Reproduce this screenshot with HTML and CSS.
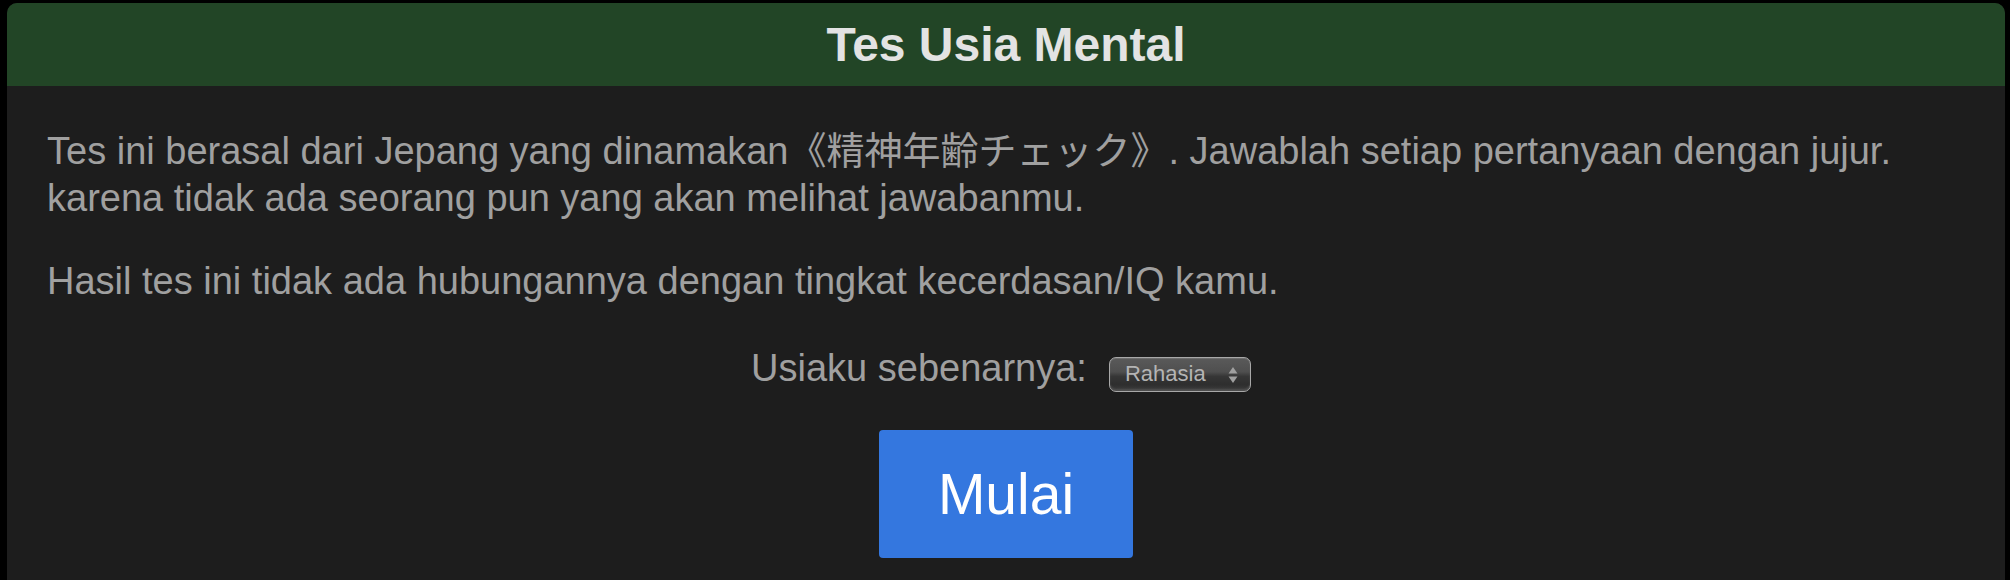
FILE: index.html
```html
<!DOCTYPE html>
<html lang="id">
<head>
<meta charset="utf-8">
<title>Tes Usia Mental</title>
<link rel="stylesheet" href="styles.css">
</head>
<body>
<div class="panel">
  <div class="header">Tes Usia Mental</div>
  <div class="content">
    <p class="intro">Tes ini berasal dari Jepang yang dinamakan《精神年齢チェック》. Jawablah setiap pertanyaan dengan jujur.<br>karena tidak ada seorang pun yang akan melihat jawabanmu.</p>
    <p class="note">Hasil tes ini tidak ada hubungannya dengan tingkat kecerdasan/IQ kamu.</p>
    <div class="age-row">
      <label class="age-label" for="age">Usiaku sebenarnya:</label>
      <span class="select-wrap">
        <select id="age" class="age-select">
          <option>Rahasia</option>
        </select>
        <svg class="select-arrows" width="12" height="20" viewBox="0 0 12 20" aria-hidden="true">
          <path d="M6 2 L10.5 8.5 L1.5 8.5 Z" fill="#a0a0a0"/>
          <path d="M6 18 L10.5 11.5 L1.5 11.5 Z" fill="#a0a0a0"/>
        </svg>
      </span>
    </div>
    <div class="actions">
      <button class="start-btn" type="button">Mulai</button>
    </div>
  </div>
</div>
</body>
</html>
```

FILE: styles.css
```css
html, body {
  margin: 0;
  background: #000;
}

body {
  padding: 3px 5px 0 7px;
  font-family: "Liberation Sans", Arial, "Noto Sans CJK JP", sans-serif;
}

.panel {
  background: #1d1d1d;
  border-radius: 10px 10px 0 0;
  min-height: 600px;
}

.header {
  height: 83px;
  display: flex;
  align-items: center;
  justify-content: center;
  background: #224526;
  border-radius: 10px 10px 0 0;
  color: #e3e3e3;
  font-size: 48px;
  font-weight: bold;
}

.content {
  padding: 42px 40px 0 40px;
  color: #a0a0a0;
  font-size: 38px;
  line-height: 47px;
}

.intro,
.note {
  margin: 0;
}

.note {
  margin-top: 36px;
}

.age-row {
  margin-top: 40px;
  display: flex;
  justify-content: center;
  align-items: baseline;
  gap: 22px;
  padding-right: 10px;
}

.age-label {
  color: #a0a0a0;
}

.select-wrap {
  position: relative;
  display: inline-flex;
  line-height: normal;
}

.age-select {
  appearance: none;
  -webkit-appearance: none;
  width: 142px;
  height: 35px;
  margin: 0;
  padding: 0 0 0 15px;
  border: 1.5px solid #a8a8a8;
  border-radius: 7px;
  background:
    linear-gradient(#5a5a5a 0%, #4f4f4f 42%, #363636 56%, #2e2e2e 80%, #3c3c3c 100%);
  box-shadow: inset 0 1px 0 rgba(255,255,255,0.12), inset 0 -2px 2px rgba(120,120,120,0.35);
  color: #b4b4b4;
  font-family: "Liberation Sans", Arial, sans-serif;
  font-size: 22px;
  line-height: 32px;
  outline: none;
}

.select-arrows {
  position: absolute;
  right: 12px;
  top: 8px;
  pointer-events: none;
}

.actions {
  margin-top: 38px;
  display: flex;
  justify-content: center;
}

.start-btn {
  height: 128px;
  padding: 0 59px;
  border: none;
  border-radius: 4px;
  background: #3477df;
  color: #ffffff;
  font-family: "Liberation Sans", Arial, sans-serif;
  font-size: 57px;
  cursor: pointer;
}
```
